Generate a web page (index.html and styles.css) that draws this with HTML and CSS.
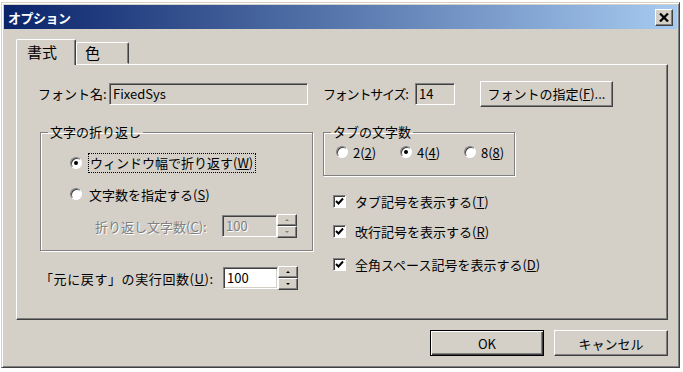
FILE: index.html
```html
<!doctype html>
<html lang="ja">
<head>
  <meta charset="utf-8">
  <title>オプション</title>
  <link rel="stylesheet" href="styles.css">
</head>
<body>
  <div class="window">
    <div class="titleBar">
      <span class="titleText">オプション</span>
      <span class="closeBox">
        <svg width="10" height="9" viewBox="0 0 10 9"><path d="M1 0.5 L9 8.5 M9 0.5 L1 8.5" stroke="#000" stroke-width="2.2" fill="none"/></svg>
      </span>
    </div>

    <div class="client">
      <div class="tabStrip">
        <div class="tab active">書式</div>
        <div class="tab">色</div>
      </div>

      <div class="panel">
        <div class="rowFont">
          <span class="lblName">フォント名:</span>
          <span class="field readOnly wName">FixedSys</span>
          <span class="lblSize">フォントサイズ:</span>
          <span class="field readOnly wSize">14</span>
          <span class="button wPick">フォントの指定(<u>F</u>)...</span>
        </div>

        <div class="columns">
          <div class="leftCol">
            <fieldset class="group wrapGroup">
              <legend>文字の折り返し</legend>
              <div class="groupBody">
                <div class="option first">
                  <span class="radio checked"></span>
                  <span class="focus">ウィンドウ幅で折り返す(<u>W</u>)</span>
                </div>
                <div class="option">
                  <span class="radio"></span>
                  <span>文字数を指定する(<u>S</u>)</span>
                </div>
                <div class="option disabledRow">
                  <span class="disabled">折り返し文字数(<u>C</u>):</span>
                  <span class="field readOnly dim wNum">100</span>
                  <span class="spin dimSpin"><span class="spinBtn"><i class="up"></i></span><span class="spinBtn"><i class="down"></i></span></span>
                </div>
              </div>
            </fieldset>

            <div class="undoRow">
              <span class="undoLabel">「元に戻す」の実行回数(<u>U</u>):</span>
              <span class="field wNum">100</span>
              <span class="spin"><span class="spinBtn"><i class="up"></i></span><span class="spinBtn"><i class="down"></i></span></span>
            </div>
          </div>

          <div class="rightCol">
            <fieldset class="group tabGroup">
              <legend>タブの文字数</legend>
              <div class="tabRadios">
                <span class="radioItem"><span class="radio"></span><span>2(<u>2</u>)</span></span>
                <span class="radioItem"><span class="radio checked"></span><span>4(<u>4</u>)</span></span>
                <span class="radioItem"><span class="radio"></span><span>8(<u>8</u>)</span></span>
              </div>
            </fieldset>

            <div class="check first">
              <span class="box"><svg width="9" height="9" viewBox="0 0 9 9"><path d="M1 4 L3.5 6.5 L8 1.5" stroke="#000" stroke-width="2" fill="none"/></svg></span>
              <span>タブ記号を表示する(<u>T</u>)</span>
            </div>
            <div class="check second">
              <span class="box"><svg width="9" height="9" viewBox="0 0 9 9"><path d="M1 4 L3.5 6.5 L8 1.5" stroke="#000" stroke-width="2" fill="none"/></svg></span>
              <span>改行記号を表示する(<u>R</u>)</span>
            </div>
            <div class="check">
              <span class="box"><svg width="9" height="9" viewBox="0 0 9 9"><path d="M1 4 L3.5 6.5 L8 1.5" stroke="#000" stroke-width="2" fill="none"/></svg></span>
              <span>全角スペース記号を表示する(<u>D</u>)</span>
            </div>
          </div>
        </div>
      </div>

      <div class="buttonRow">
        <span class="button default">OK</span>
        <span class="button">キャンセル</span>
      </div>
    </div>
  </div>
</body>
</html>
```

FILE: styles.css
```css
body {
  margin: 0;
  background: #ffffff;
  font-family: "Noto Sans CJK JP", "DejaVu Sans", sans-serif;
  font-size: 13px;
  color: #000;
}
u { text-decoration: underline; text-underline-offset: 1px; }

.window {
  margin: 2px 0 0 1px;
  width: 679px;
  height: 366px;
  box-sizing: border-box;
  background: #d4d0c8;
  border: 1px solid;
  border-color: #d4d0c8 #404040 #404040 #d4d0c8;
  box-shadow: inset 1px 1px 0 #fff, inset -1px -1px 0 #808080;
  padding: 2px;
}

.titleBar {
  height: 24px;
  background: linear-gradient(to right, #0a246a, #a6caf0);
  display: flex;
  align-items: center;
  justify-content: space-between;
  padding: 0 4px 0 4px;
}
.titleText {
  color: #fff;
  font-weight: bold;
  font-size: 13px;
  letter-spacing: -0.5px;
}
.closeBox {
  width: 18px;
  height: 17px;
  box-sizing: border-box;
  background: #d4d0c8;
  border: 1px solid;
  border-color: #fff #404040 #404040 #fff;
  box-shadow: inset -1px -1px 0 #808080;
  display: flex;
  align-items: center;
  justify-content: center;
}

.client {
  padding: 10px 9px 0 12px;
}

.tabStrip {
  display: flex;
  align-items: flex-end;
  height: 25px;
}
.tab {
  font-size: 15px;
  height: 22px;
  box-sizing: border-box;
  border: 1px solid;
  border-color: #fff #404040 transparent #fff;
  box-shadow: inset -1px 0 0 #808080;
  border-radius: 2px 2px 0 0;
  padding: 0 0 0 8px;
  width: 53px;
  line-height: 20px;
}
.tab.active {
  height: 26px;
  width: 60px;
  padding-left: 10px;
  margin-bottom: -1px;
  background: #d4d0c8;
  position: relative;
  z-index: 1;
  border-bottom: none;
  line-height: 24px;
}

.panel {
  height: 256px;
  box-sizing: border-box;
  border: 1px solid;
  border-color: #fff #404040 #404040 #fff;
  box-shadow: inset -1px -1px 0 #808080;
  padding: 16px 0 0 21px;
}

.rowFont {
  display: flex;
  align-items: center;
  height: 25px;
  white-space: nowrap;
}
.rowFont > span { flex: none; }
.lblName { width: 71px; }
.lblSize { width: 92px; margin-left: 15px; letter-spacing: -1.2px; }

.field {
  height: 22px;
  box-sizing: border-box;
  border: 1px solid;
  border-color: #808080 #fff #fff #808080;
  box-shadow: inset 1px 1px 0 #404040, inset -1px -1px 0 #d4d0c8;
  background: #fff;
  padding: 0 0 0 3px;
  line-height: 20px;
  flex: none;
}
.field.readOnly { background: #d4d0c8; }
.field.dim { color: #808080; text-shadow: 1px 1px 0 #fff; }
.wName { width: 199px; }
.wSize { width: 40px; }
.wNum { width: 55px; }

.button {
  box-sizing: border-box;
  height: 26px;
  border: 1px solid;
  border-color: #fff #404040 #404040 #fff;
  box-shadow: inset -1px -1px 0 #808080;
  display: flex;
  align-items: center;
  justify-content: center;
  background: #d4d0c8;
}
.wPick { width: 133px; margin-left: 25px; }

.columns {
  display: flex;
  margin-top: 19px;
}
.leftCol { width: 285px; }

.group {
  margin: 0;
  padding: 0;
  min-width: 0;
  box-sizing: border-box;
  border: 1px solid #808080;
  box-shadow: 1px 1px 0 #fff, inset 1px 1px 0 #fff;
}
.group legend {
  padding: 0 2px;
  margin-left: 7px;
  line-height: 14px;
}

.wrapGroup {
  margin-left: 2px;
  width: 273px;
  height: 126px;
}
.groupBody { padding-left: 29px; }
.option {
  display: flex;
  align-items: center;
  height: 20px;
  margin-top: 11px;
}
.option.first { margin-top: 14px; }
.option .radio { margin-right: 7px; }
.focus {
  outline: 1px dotted #000;
  outline-offset: 0;
  padding: 0 2px 0 1px;
  line-height: 18px;
}
.disabledRow {
  margin-top: 10px;
  height: 24px;
}
.disabled {
  color: #808080;
  text-shadow: 1px 1px 0 #fff;
  margin-left: 25px;
  width: 127px;
  white-space: nowrap;
}

.radio {
  width: 12px;
  height: 12px;
  box-sizing: border-box;
  border-radius: 50%;
  border: 1px solid;
  border-color: #808080 #fff #fff #808080;
  box-shadow: inset 1px 1px 0 #404040;
  background: #fff;
  display: inline-flex;
  align-items: center;
  justify-content: center;
  flex: none;
}
.radio.checked::after {
  content: "";
  width: 4px;
  height: 4px;
  border-radius: 50%;
  background: #000;
}

.spin {
  display: flex;
  flex-direction: column;
  width: 20px;
  height: 24px;
  flex: none;
}
.spinBtn {
  flex: 1;
  box-sizing: border-box;
  border: 1px solid;
  border-color: #fff #404040 #404040 #fff;
  box-shadow: inset -1px -1px 0 #808080;
  display: flex;
  align-items: center;
  justify-content: center;
}
.spinBtn i {
  width: 0;
  height: 0;
  border-left: 2px solid transparent;
  border-right: 2px solid transparent;
}
.spinBtn i.up { border-bottom: 2px solid #000; }
.spinBtn i.down { border-top: 2px solid #000; }
.dimSpin .spinBtn i.up { border-bottom-color: #808080; }
.dimSpin .spinBtn i.down { border-top-color: #808080; }

.undoRow {
  display: flex;
  align-items: center;
  margin-top: 15px;
  height: 24px;
}
.undoLabel { width: 183px; white-space: nowrap; flex: none; margin-left: 2px; letter-spacing: 0.6px; }

.tabGroup {
  width: 192px;
  height: 51px;
}
.tabRadios {
  display: flex;
  align-items: center;
  height: 18px;
  padding: 4px 0 0 12px;
}
.radioItem {
  display: flex;
  align-items: center;
  gap: 5px;
  width: 64px;
}
.radioItem:last-child { width: auto; }

.check {
  display: flex;
  align-items: center;
  height: 20px;
  margin-top: 13px;
  margin-left: 10px;
}
.check.first { margin-top: 15px; }
.check.second { margin-top: 10px; }
.check .box {
  width: 13px;
  height: 13px;
  box-sizing: border-box;
  border: 1px solid;
  border-color: #808080 #fff #fff #808080;
  box-shadow: inset 1px 1px 0 #404040;
  background: #fff;
  display: flex;
  align-items: center;
  justify-content: center;
  margin-right: 9px;
}

.buttonRow {
  display: flex;
  justify-content: flex-end;
  gap: 10px;
  margin-top: 10px;
}
.buttonRow .button { width: 114px; height: 26px; }
.button.default {
  border: 1px solid #000;
  box-shadow: inset 1px 1px 0 #fff, inset -1px -1px 0 #404040, inset -2px -2px 0 #808080;
}
```
